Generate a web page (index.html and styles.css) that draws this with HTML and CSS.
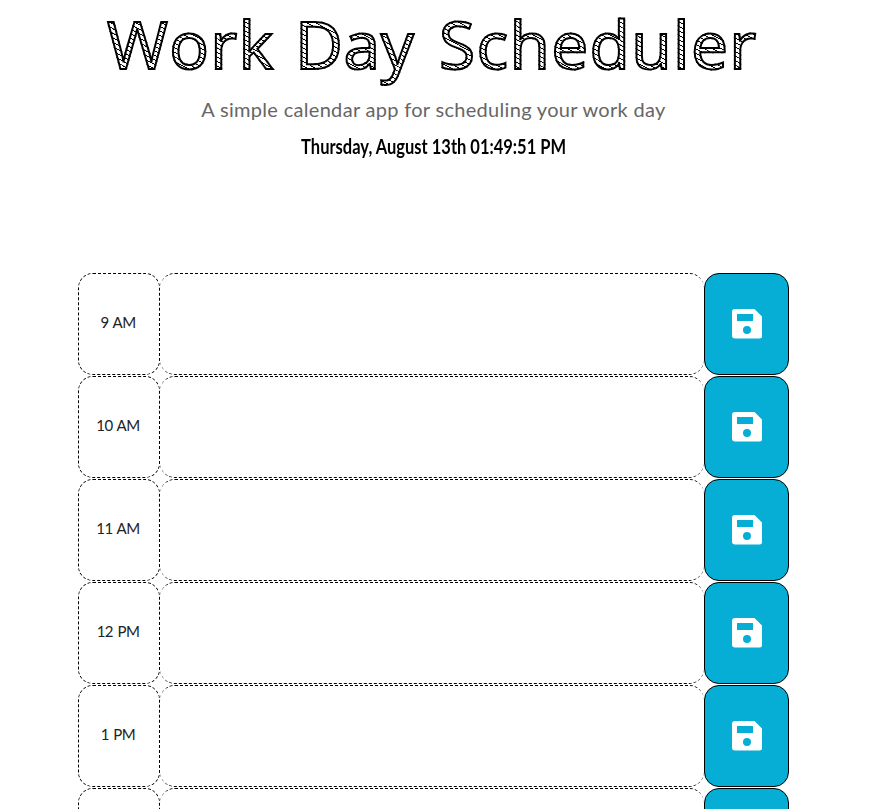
FILE: index.html
```html
<!DOCTYPE html>
<html lang="en">
<head>
<meta charset="utf-8">
<title>Work Day Scheduler</title>
<link rel="stylesheet" href="styles.css">
</head>
<body>
<svg class="defs" aria-hidden="true">
  <symbol id="save" viewBox="0 0 30 30">
    <path fill-rule="evenodd" d="M3 0H22.500L30 7.500V27a2.500 2.500 0 0 1-2.500 2.500H3A3 3 0 0 1 0 26.500V3A3 3 0 0 1 3 0ZM5 5V12H21V5ZM15 17a4 4 0 1 0 0 8a4 4 0 1 0 0-8Z"/>
  </symbol>
</svg>
<div class="page">
  <header>
    <h1><span class="w1">Work</span><span class="w2">Day</span><span class="w3">Scheduler</span></h1>
    <p class="lead"><span>A simple calendar app for scheduling your work day</span></p>
    <p class="date"><span>Thursday, August 13th 01:49:51 PM</span></p>
  </header>
  <main>
    <div class="row"><div class="hour">9 AM</div><div class="entry"></div><button aria-label="Save"><svg><use href="#save"/></svg></button></div>
    <div class="row"><div class="hour">10 AM</div><div class="entry"></div><button aria-label="Save"><svg><use href="#save"/></svg></button></div>
    <div class="row"><div class="hour">11 AM</div><div class="entry"></div><button aria-label="Save"><svg><use href="#save"/></svg></button></div>
    <div class="row"><div class="hour">12 PM</div><div class="entry"></div><button aria-label="Save"><svg><use href="#save"/></svg></button></div>
    <div class="row"><div class="hour">1 PM</div><div class="entry"></div><button aria-label="Save"><svg><use href="#save"/></svg></button></div>
    <div class="row"><div class="hour"></div><div class="entry"></div><button aria-label="Save"></button></div>
  </main>
</div>
</body>
</html>
```
FILE: styles.css
```css
* { box-sizing: border-box; }
body { margin: 0; background: #fff; color: #000; font-family: Lato, sans-serif; }
.defs { position: absolute; width: 0; height: 0; }
.page { width: 867px; height: 809px; overflow: hidden; }
header { height: 273px; }
h1 {
  display: flex; margin: 0; padding-left: 107px; height: 94px;
  font-family: "Open Sans", Lato, sans-serif;
  font-size: 66px; font-weight: 500; line-height: 87px; white-space: nowrap;
}
h1 span {
  color: transparent;
  background: repeating-linear-gradient(28deg, #000 0 .8px, #fff 1px 4px);
  -webkit-background-clip: text; background-clip: text;
  -webkit-text-stroke: 2px #000;
}
.w1 { width: 188px; letter-spacing: 1.3px; }
.w2 { width: 144px; letter-spacing: .6px; }
.w3 { letter-spacing: 1.3px; }
.lead, .date { margin: 0; text-align: center; white-space: nowrap; }
.lead { height: 36px; line-height: 30px; font-size: 20px; color: #666; }
.lead span { letter-spacing: .31px; }
.date { height: 34px; line-height: 33px; font-size: 20px; font-weight: 700; }
.date span { display: inline-block; transform: scaleX(.825); }
main { padding-left: 78px; }
.row { display: flex; width: 711px; height: 102px; margin-bottom: 1px; }
.hour, .entry { border: 1px dashed #000; border-radius: 15px; }
.hour { width: 82px; display: flex; align-items: center; justify-content: center; padding: 0 2px 4px 0; font-size: 15px; letter-spacing: -.5px; word-spacing: 1px; color: #222; }
.entry { width: 544px; border-left: 0; border-right: 0; }
button {
  width: 85px; padding: 0; border: 1px solid #000; border-radius: 15px;
  background: #06aed5; color: #fff; display: flex; align-items: center; justify-content: center;
}
button svg { width: 30px; height: 30px; fill: currentColor; }
```
